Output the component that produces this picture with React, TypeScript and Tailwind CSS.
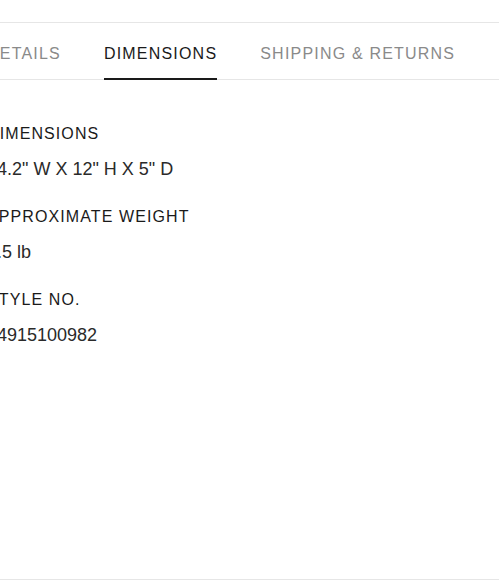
const tabs = ["DETAILS", "DIMENSIONS", "SHIPPING & RETURNS"]

const specs = [
  { label: "DIMENSIONS", value: '14.2" W X 12" H X 5" D' },
  { label: "APPROXIMATE WEIGHT", value: "2.5 lb" },
  { label: "STYLE NO.", value: "14915100982" },
]

export default function App() {
  const active = 1
  return (
    <div className="h-[580px] w-full overflow-hidden bg-white pt-[22px] font-['Liberation_Sans',Arial,sans-serif]">
      <div className="flex h-full flex-col border-y border-[#e6e6e6]">
        <div className="flex border-b border-[#e6e6e6]">
          <div className="-ml-[13px] flex gap-[43px]">
            {tabs.map((tab, i) => (
              <button
                key={tab}
                className={`-mb-px border-b-2 pt-[19px] pb-[12px] text-[16px] leading-6 tracking-[1.2px] whitespace-nowrap ${
                  i === active ? "border-[#1a1a1a] text-[#1a1a1a]" : "border-transparent text-[#8a8a8a]"
                }`}
              >
                {tab}
              </button>
            ))}
          </div>
        </div>

        <div className="-ml-[13px] flex flex-col gap-[22px] pt-[42px]">
          {specs.map((spec) => (
            <div key={spec.label}>
              <h4 className="text-[16px] leading-6 tracking-[1.1px] text-[#1a1a1a]">{spec.label}</h4>
              <p className="mt-[9px] text-[18px] leading-7 text-[#2a2a2a]">{spec.value}</p>
            </div>
          ))}
        </div>
      </div>
    </div>
  )
}
